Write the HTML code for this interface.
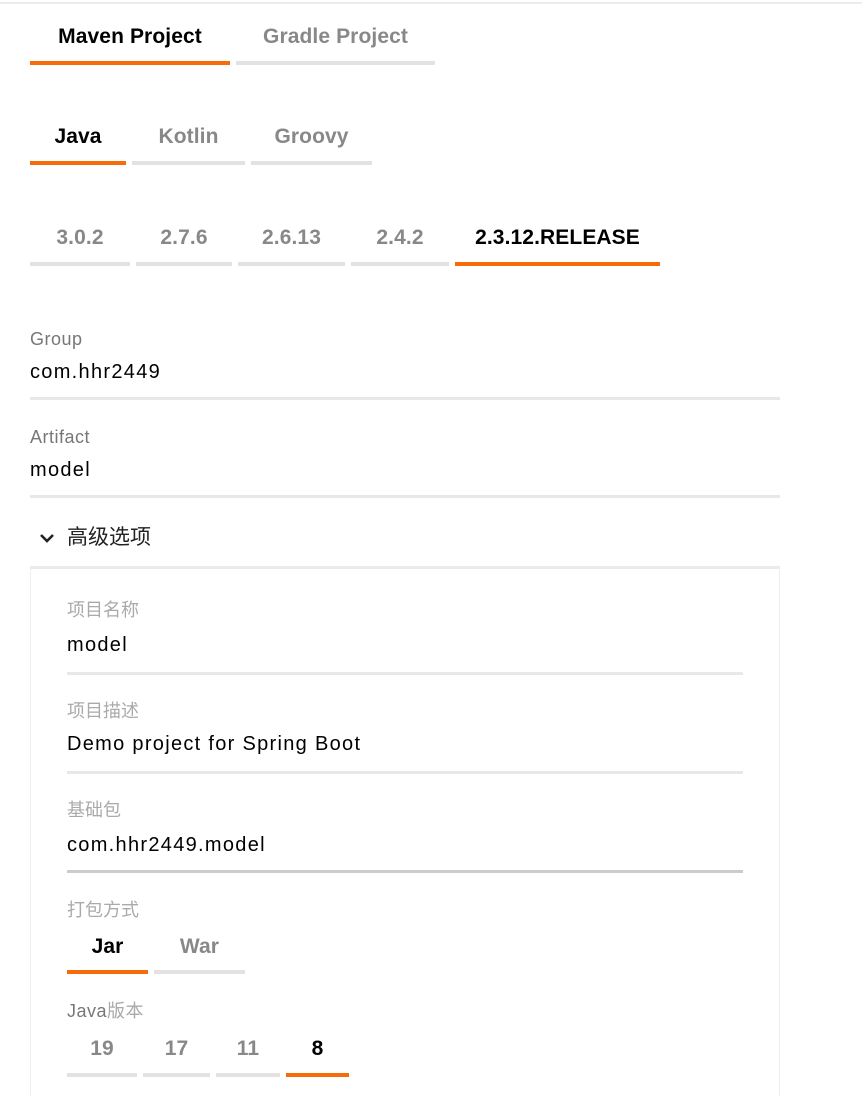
<!DOCTYPE html>
<html><head><meta charset="utf-8"><style>
body{margin:0;width:862px;height:1086px;background:#fff;position:relative;overflow:hidden;font-family:"Liberation Sans","Noto Sans CJK SC",sans-serif}
.a{position:absolute}
.t{position:absolute;font-weight:bold;font-size:21px;letter-spacing:0.1px;color:#888;text-align:center;line-height:24px}
.t.on{color:#000}
.u{position:absolute;height:4px;background:#e2e2e2}
.u.on{background:#f76b0a}
.lab{position:absolute;font-size:18px;color:#777;line-height:20px;letter-spacing:0.5px}
.lab2{position:absolute;font-size:18px;color:#aaa;line-height:20px}
.val{position:absolute;font-size:20px;color:#000;line-height:22px;letter-spacing:1.3px}
.ln{position:absolute;height:3px;background:#e8e8e8}
</style></head><body>
<div class="a" style="left:0;top:2px;width:862px;height:2px;background:#ececec"></div>

<div class="t on" style="left:30px;top:25px;width:200px">Maven Project</div>
<div class="u on" style="left:30px;top:61px;width:200px"></div>
<div class="t" style="left:236px;top:25px;width:199px">Gradle Project</div>
<div class="u" style="left:236px;top:61px;width:199px"></div>

<div class="t on" style="left:30px;top:125px;width:96px">Java</div>
<div class="u on" style="left:30px;top:161px;width:96px"></div>
<div class="t" style="left:132px;top:125px;width:113px">Kotlin</div>
<div class="u" style="left:132px;top:161px;width:113px"></div>
<div class="t" style="left:251px;top:125px;width:121px">Groovy</div>
<div class="u" style="left:251px;top:161px;width:121px"></div>

<div class="t" style="left:30px;top:226px;width:100px">3.0.2</div>
<div class="u" style="left:30px;top:262px;width:100px"></div>
<div class="t" style="left:136px;top:226px;width:96px">2.7.6</div>
<div class="u" style="left:136px;top:262px;width:96px"></div>
<div class="t" style="left:238px;top:226px;width:107px">2.6.13</div>
<div class="u" style="left:238px;top:262px;width:107px"></div>
<div class="t" style="left:351px;top:226px;width:98px">2.4.2</div>
<div class="u" style="left:351px;top:262px;width:98px"></div>
<div class="t on" style="left:455px;top:226px;width:205px">2.3.12.RELEASE</div>
<div class="u on" style="left:455px;top:262px;width:205px"></div>

<div class="lab" style="left:30px;top:329px">Group</div>
<div class="val" style="left:30px;top:361px">com.hhr2449</div>
<div class="ln" style="left:30px;top:397px;width:750px"></div>
<div class="lab" style="left:30px;top:427px">Artifact</div>
<div class="val" style="left:30px;top:459px">model</div>
<div class="ln" style="left:30px;top:495px;width:750px"></div>

<svg class="a" style="left:38px;top:531px" width="18" height="14" viewBox="0 0 18 14"><path d="M3 4 L9 10 L15 4" fill="none" stroke="#222" stroke-width="2.6"/></svg>
<div class="a" style="left:67px;top:525px;font-size:21px;color:#222;line-height:26px">高级选项</div>

<div class="a" style="left:30px;top:566px;width:750px;height:530px;border-top:3px solid #ebebeb;border-left:1px solid #eee;border-right:1px solid #eee;box-sizing:border-box"></div>

<div class="lab2" style="left:67px;top:600px">项目名称</div>
<div class="val" style="left:67px;top:634px">model</div>
<div class="ln" style="left:67px;top:672px;width:676px"></div>
<div class="lab2" style="left:67px;top:701px">项目描述</div>
<div class="val" style="left:67px;top:733px">Demo project for Spring Boot</div>
<div class="ln" style="left:67px;top:771px;width:676px"></div>
<div class="lab2" style="left:67px;top:800px">基础包</div>
<div class="val" style="left:67px;top:834px">com.hhr2449.model</div>
<div class="ln" style="left:67px;top:870px;width:676px;background:#ccc"></div>
<div class="lab2" style="left:67px;top:900px">打包方式</div>

<div class="t on" style="left:67px;top:935px;width:81px">Jar</div>
<div class="u on" style="left:67px;top:970px;width:81px"></div>
<div class="t" style="left:154px;top:935px;width:91px">War</div>
<div class="u" style="left:154px;top:970px;width:91px"></div>

<div class="lab" style="left:67px;top:1001px">Java<span style="color:#aaa">版本</span></div>
<div class="t" style="left:67px;top:1037px;width:70px">19</div>
<div class="u" style="left:67px;top:1073px;width:70px"></div>
<div class="t" style="left:143px;top:1037px;width:67px">17</div>
<div class="u" style="left:143px;top:1073px;width:67px"></div>
<div class="t" style="left:216px;top:1037px;width:64px">11</div>
<div class="u" style="left:216px;top:1073px;width:64px"></div>
<div class="t on" style="left:286px;top:1037px;width:63px">8</div>
<div class="u on" style="left:286px;top:1073px;width:63px"></div>
</body></html>
